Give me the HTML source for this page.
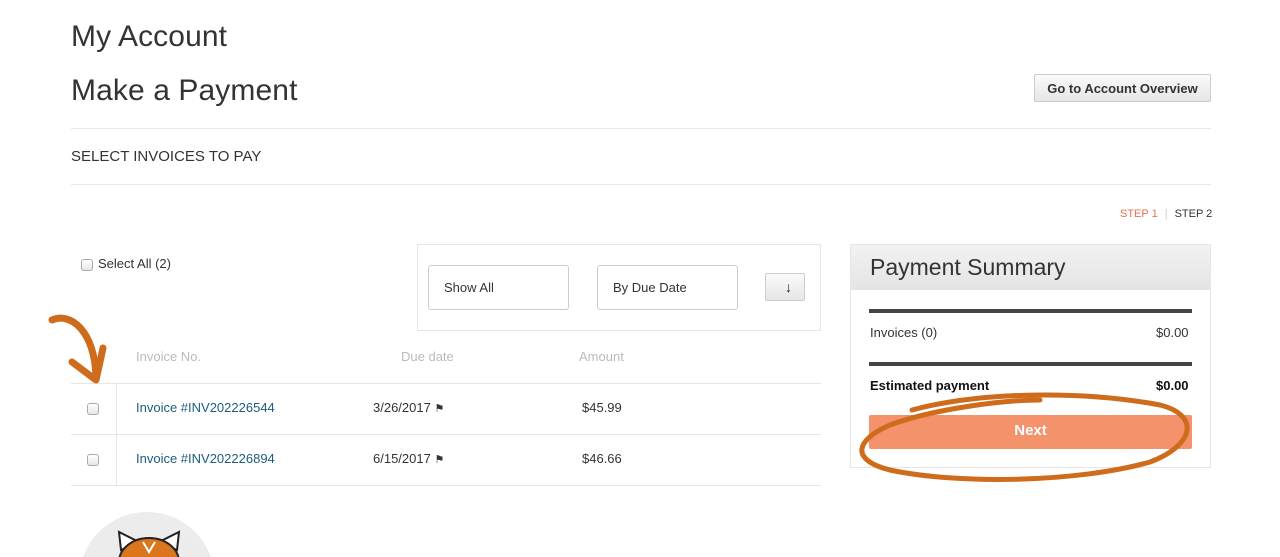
<!DOCTYPE html>
<html style="width:1280px;height:557px;overflow:hidden"><head><meta charset="utf-8"><style>
*{margin:0;padding:0;box-sizing:border-box}
body{width:1280px;height:557px;overflow:hidden;background:#fff;font-family:"Liberation Sans",sans-serif;color:#333;position:relative}
.a{position:absolute}
.hr{position:absolute;left:71px;width:1140px;height:1px;background:#e8e8e8}
.cb{position:absolute;width:12px;height:12px;border:1px solid #aaa;border-radius:3px;background:linear-gradient(#fff,#e6e6e6)}
.sel{position:absolute;top:265px;width:141px;height:45px;border:1px solid #ccc;border-radius:3px;font-size:13px;padding:14px 0 0 15px;color:#333}
.lnk{color:#1d5c7e;font-size:13px}
.t13{font-size:13px}
</style></head><body>
<div class="a" style="left:71px;top:20px;font-size:30px;color:#333;letter-spacing:0.1px">My Account</div>
<div class="a" style="left:71px;top:74px;font-size:30px;color:#333;letter-spacing:0.1px">Make a Payment</div>
<div class="a" style="left:1034px;top:74px;width:177px;height:28px;border:1px solid #ccc;border-radius:2px;background:linear-gradient(#fafafa,#e6e6e6);font-size:13px;font-weight:bold;color:#333;text-align:center;line-height:27px">Go to Account Overview</div>
<div class="hr" style="top:128px"></div>
<div class="a" style="left:71px;top:148px;font-size:15px">SELECT INVOICES TO PAY</div>
<div class="hr" style="top:184px"></div>
<div class="a" style="left:1120px;top:208px;font-size:11px;white-space:nowrap"><span style="color:#e8704a">STEP 1</span><span style="color:#ccc;margin:0 7px">|</span>STEP 2</div>

<div class="cb" style="left:81px;top:259px"></div>
<div class="a t13" style="left:98px;top:256px">Select All (2)</div>

<div class="a" style="left:417px;top:244px;width:404px;height:87px;border:1px solid #e6e6e6"></div>
<div class="sel" style="left:428px">Show All</div>
<div class="sel" style="left:597px">By Due Date</div>
<div class="a" style="left:765px;top:273px;width:40px;height:28px;border:1px solid #ccc;border-radius:2px;background:linear-gradient(#fafafa,#e6e6e6);text-align:center;line-height:27px;font-size:14px;font-weight:bold"><span style="color:#fff;text-shadow:0 0 1px #bbb">↑</span><span style="color:#222">↓</span></div>

<div class="a t13" style="left:136px;top:349px;color:#bbb">Invoice No.</div>
<div class="a t13" style="left:401px;top:349px;color:#bbb">Due date</div>
<div class="a t13" style="left:579px;top:349px;color:#bbb">Amount</div>
<div class="a" style="left:71px;top:383px;width:750px;height:1px;background:#e6e6e6"></div>
<div class="a" style="left:71px;top:434px;width:750px;height:1px;background:#e6e6e6"></div>
<div class="a" style="left:71px;top:485px;width:750px;height:1px;background:#e6e6e6"></div>
<div class="a" style="left:116px;top:384px;width:1px;height:101px;background:#e6e6e6"></div>
<div class="cb" style="left:87px;top:403px"></div>
<div class="cb" style="left:87px;top:454px"></div>
<div class="a lnk" style="left:136px;top:400px">Invoice #INV202226544</div>
<div class="a lnk" style="left:136px;top:451px">Invoice #INV202226894</div>
<div class="a t13" style="left:373px;top:400px">3/26/2017 <span style="font-size:11px">⚑</span></div>
<div class="a t13" style="left:373px;top:451px">6/15/2017 <span style="font-size:11px">⚑</span></div>
<div class="a t13" style="left:582px;top:400px">$45.99</div>
<div class="a t13" style="left:582px;top:451px">$46.66</div>

<div class="a" style="left:850px;top:244px;width:361px;height:224px;border:1px solid #e6e6e6"></div>
<div class="a" style="left:851px;top:245px;width:359px;height:45px;background:linear-gradient(#f2f2f2,#e4e4e4)"></div>
<div class="a" style="left:870px;top:254px;font-size:23px;color:#333">Payment Summary</div>
<div class="a" style="left:869px;top:309px;width:323px;height:4px;background:#444"></div>
<div class="a t13" style="left:870px;top:325px">Invoices (0)</div>
<div class="a t13" style="left:1156px;top:325px">$0.00</div>
<div class="a" style="left:869px;top:362px;width:323px;height:4px;background:#444"></div>
<div class="a t13" style="left:870px;top:378px;font-weight:bold;color:#111">Estimated payment</div>
<div class="a t13" style="left:1156px;top:378px;font-weight:bold;color:#111">$0.00</div>
<div class="a" style="left:869px;top:415px;width:323px;height:34px;background:#f4926c;border-radius:2px;color:#fff;font-weight:bold;font-size:15px;text-align:center;line-height:32px">Next</div>

<div class="a" style="left:79px;top:512px;width:136px;height:45px;overflow:hidden">
<div style="position:absolute;left:0;top:0;width:136px;height:136px;border-radius:50%;background:#ececec"></div>
<svg width="136" height="45" style="position:absolute;left:0;top:0"><path d="M42 38 L40 20 L60 30 Z M98 38 L100 20 L80 30 Z" fill="#fff" stroke="#222" stroke-width="2"/><ellipse cx="70" cy="50" rx="30" ry="24" fill="#d9761e" stroke="#222" stroke-width="2"/><path d="M64 30 l6 10 6-10" stroke="#fff" stroke-width="2" fill="none"/></svg>
</div>

<svg class="a" style="left:0;top:0" width="1280" height="557">
<path d="M52 320 C70 312 95 330 96 378" stroke="#cf6c1c" stroke-width="7" fill="none" stroke-linecap="round"/>
<path d="M72 362 L96 380 L103 348" stroke="#cf6c1c" stroke-width="7" fill="none" stroke-linecap="round" stroke-linejoin="round"/>
<path d="M912 410 C980 392 1080 390 1160 405 C1200 415 1195 445 1150 462 C1080 482 960 485 890 470 C850 460 855 440 890 425 C930 410 1000 400 1040 400" stroke="#cf6c1c" stroke-width="5" fill="none" stroke-linecap="round"/>
</svg>
</body></html>
